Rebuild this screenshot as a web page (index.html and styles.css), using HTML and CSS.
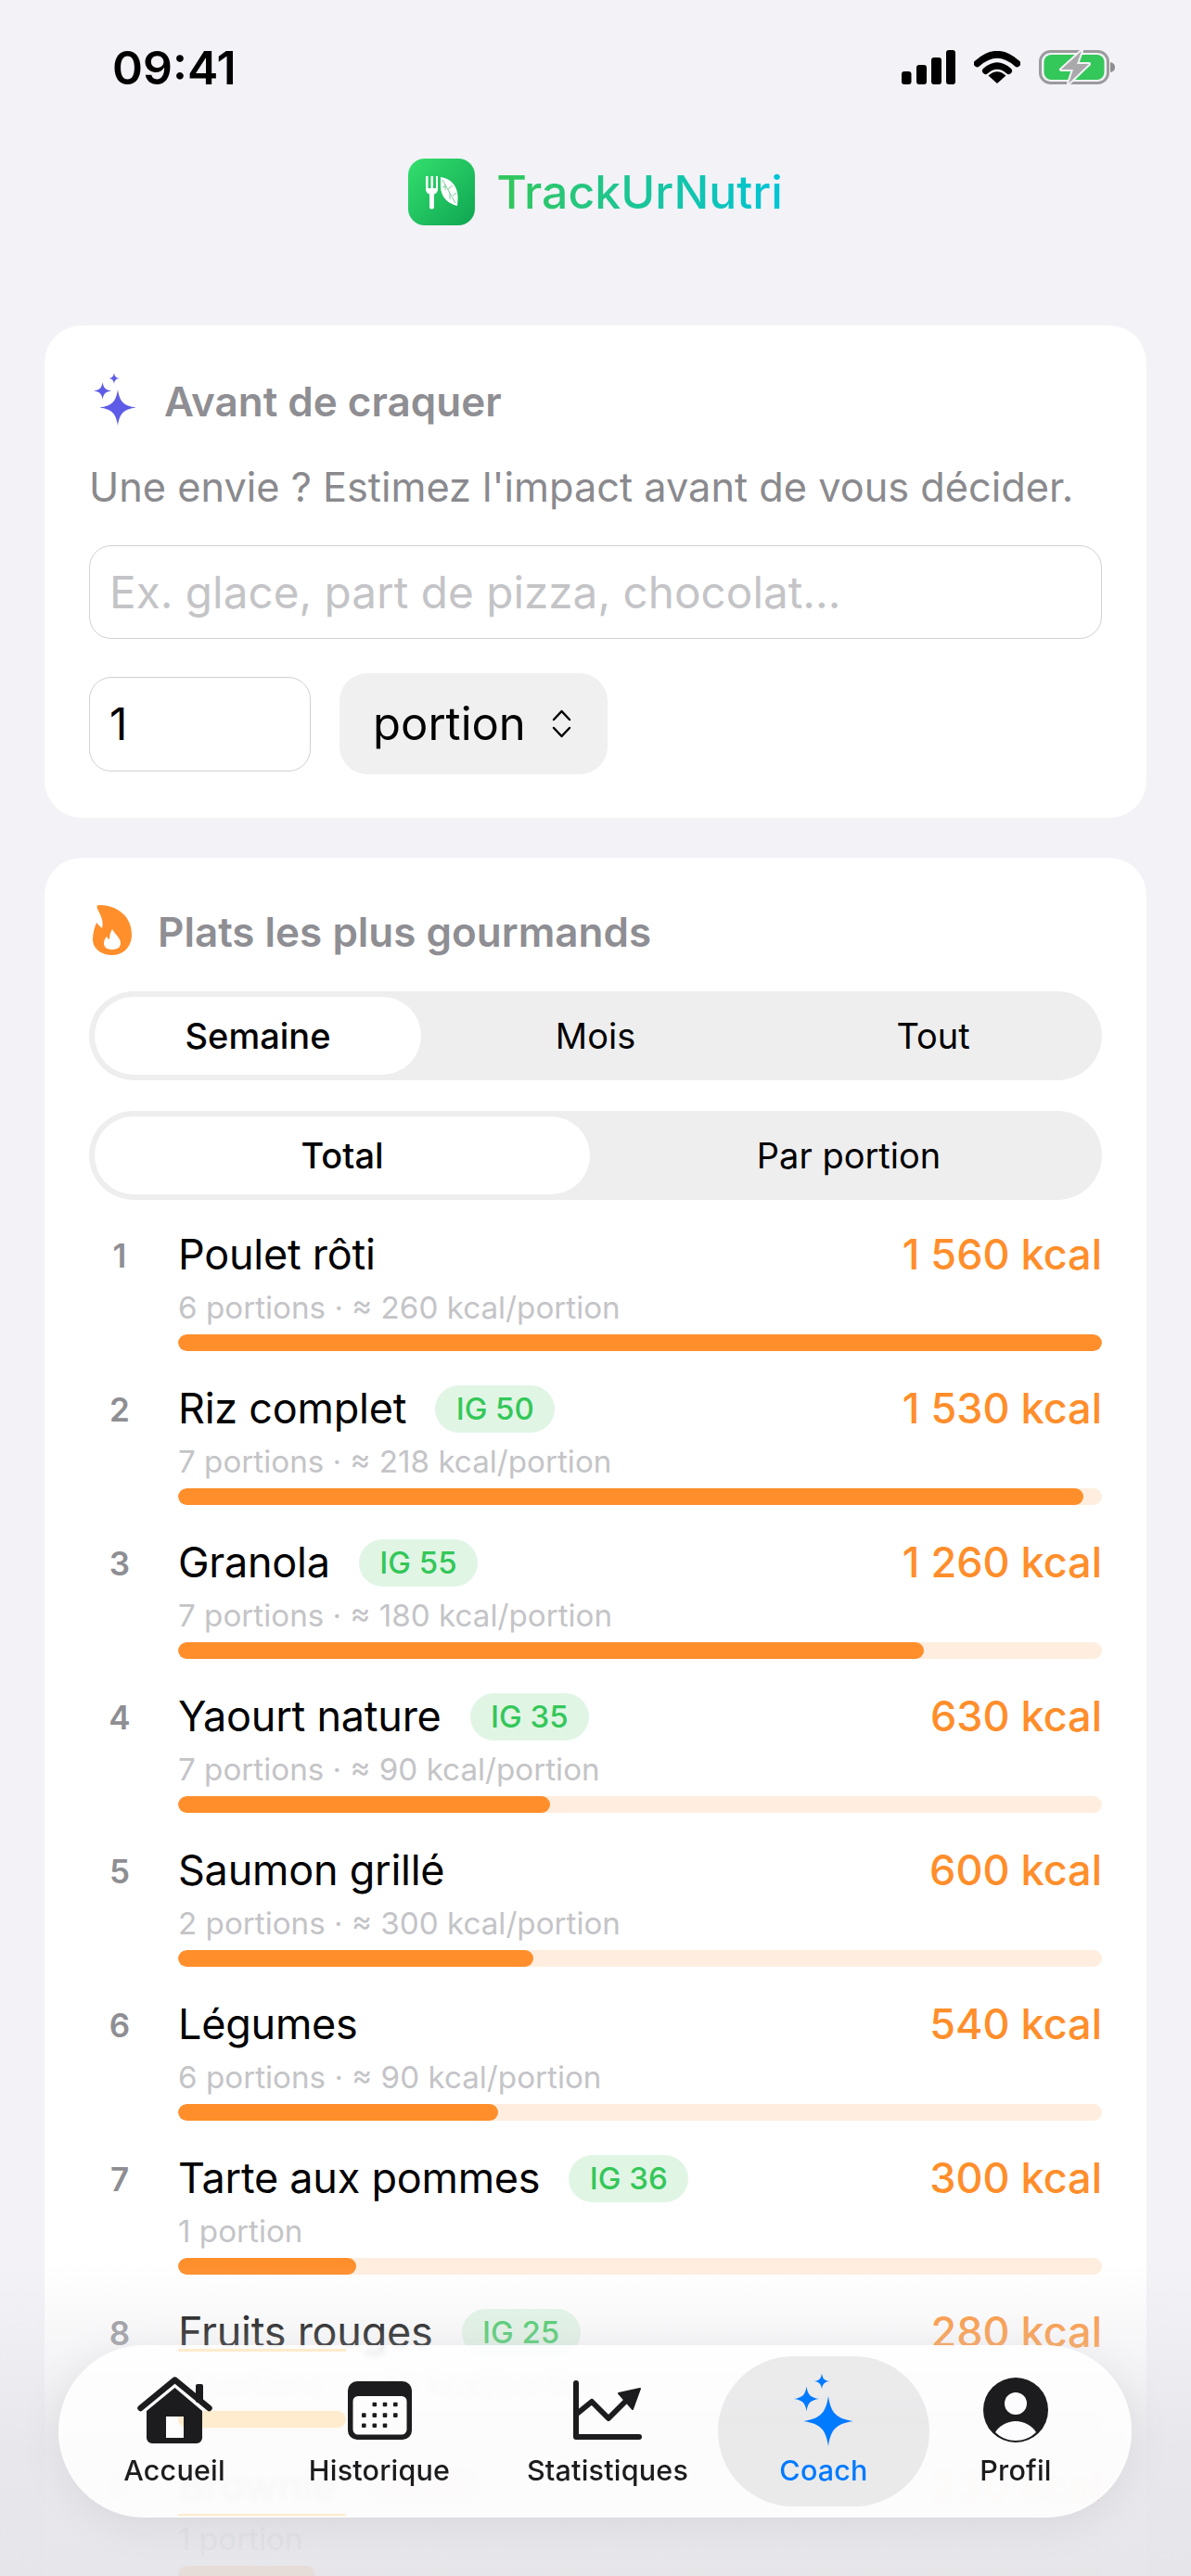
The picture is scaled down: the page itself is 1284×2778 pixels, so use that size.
FILE: index.html
```html
<!DOCTYPE html>
<html lang="fr">
<head>
    <meta charset="UTF-8">
    <meta name="viewport" content="width=device-width, initial-scale=1.0">
    <title>TrackUrNutri</title>
    <link rel="stylesheet" href="styles.css">
</head>
<body>
    <svg class="defs" width="0" height="0">
        <defs>
            <path id="spark" d="M0 -1C.1 -.32 .32 -.1 1 0C.32 .1 .1 .32 0 1C-.1 .32 -.32 .1 -1 0C-.32 -.1 -.1 -.32 0 -1Z"/>
            <linearGradient id="logoGrad" x1="0" y1="0" x2="1" y2="1">
                <stop offset="0" stop-color="#34e06e"/>
                <stop offset="1" stop-color="#0fa552"/>
            </linearGradient>
        </defs>
    </svg>

    <div class="screen">
        <!-- Barre de statut -->
        <div class="status">
            <span class="time">09:41</span>
            <div class="status-icons">
                <svg width="58" height="37" viewBox="0 0 58 37">
                    <rect x="0" y="23" width="10.5" height="14" rx="3"/>
                    <rect x="16" y="16" width="11" height="21" rx="3"/>
                    <rect x="32" y="8" width="11" height="29" rx="3"/>
                    <rect x="48" y="0" width="10" height="37" rx="3"/>
                </svg>
                <svg width="50" height="35" viewBox="0 0 50 35">
                    <path d="M3.5 13.5Q25 -6 46.5 13.5" fill="none" stroke="#000" stroke-width="7.5" stroke-linecap="round"/>
                    <path d="M12.5 21.5Q25 10.5 37.5 21.5" fill="none" stroke="#000" stroke-width="7" stroke-linecap="round"/>
                    <path d="M25 35L15.5 26.5Q25 18 34.5 26.5Z"/>
                </svg>
                <svg width="82" height="39" viewBox="0 0 82 39">
                    <rect x="1.5" y="2.5" width="73" height="34" rx="11" fill="none" stroke="#9b9b9d" stroke-width="3"/>
                    <path d="M77 14Q82 15 82 19.500Q82 24 77 25Z" fill="#8e8e90"/>
                    <rect x="5.500" y="6" width="65" height="27" rx="8" fill="#34c759"/>
                    <path d="M46 2L24 22H37L32 37L54 16H41Z" fill="#a9a9ab" stroke="#f2f2f7" stroke-width="4" stroke-linejoin="round" paint-order="stroke"/>
                </svg>
            </div>
        </div>

        <header class="brand">
            <svg class="brand-icon" width="72" height="72" viewBox="0 0 72 72">
                <rect width="72" height="72" rx="18" fill="url(#logoGrad)"/>
                <path fill="#fff" d="M19 19h2.500v13h3V19h2.500v13h3V19H32v14c0 3-2 5-4 5.500V52a2.500 2.500 0 0 1-5 0V38.500c-2-.5-4-2.500-4-5.500Z"/>
                <path fill="#fff" d="M35 20C45 21 53 29 53.500 40C53.700 44 53.300 48 53 51C44 49 35 42 35 30Z"/>
                <path fill="none" stroke="#7dcf9d" stroke-width="1" d="M37 23L51 48M40 28V34M43 33L48 29M45 37V44M48 40L52 37M41 30L37 31"/>
            </svg>
            <span class="brand-name">TrackUrNutri</span>
        </header>

        <section class="card craving">
            <div class="card-title">
                <svg class="sparkles" width="46" height="57" viewBox="0 0 46 57" fill="#5e5ce6">
                    <use href="#spark" transform="translate(26 37.500) scale(19.500)"/>
                    <use href="#spark" transform="translate(9.600 19.500) scale(9.500)"/>
                    <use href="#spark" transform="translate(22 6) scale(6)"/>
                </svg>
                <h2>Avant de craquer</h2>
            </div>
            <p class="hint">Une envie ? Estimez l'impact avant de vous décider.</p>
            <input class="field field-food" type="text" placeholder="Ex. glace, part de pizza, chocolat...">
            <div class="qty-row">
                <input class="field field-qty" type="text" value="1">
                <div class="unit-select">
                    <span>portion</span>
                    <svg width="21" height="31" viewBox="0 0 21 31" fill="none" stroke="#000" stroke-width="2.500" stroke-linecap="round" stroke-linejoin="round">
                        <path d="M2 11L10.500 2L19 11"/>
                        <path d="M2 20L10.500 29L19 20"/>
                    </svg>
                </div>
            </div>
        </section>

        <section class="card top-meals">
            <div class="card-title title-meals">
                <svg class="flame" width="42" height="54" viewBox="0 0 42 54">
                    <path fill="#ff8e2b" d="M5 .5C6 0 7 0 8 0C27 1 42 12 42 32C42 45 33 54 21 54C9 54 0 47 0 37C0 30 2 24 4 19C5.500 21 7.500 23 10 25C12 18 9 12 6 6C5 4 4 1.500 5 .5Z"/>
                    <path fill="#fff" d="M21 26C24 32 30 35 30 41C30 46 26 48 21 48C16 48 12 46 12 41C12 38 14 35 15 34C16 36 17 37 18 37C18 33 19 29 21 26Z"/>
                </svg>
                <h2>Plats les plus gourmands</h2>
            </div>

            <div class="segment seg-3">
                <span class="seg-item on">Semaine</span>
                <span class="seg-item">Mois</span>
                <span class="seg-item">Tout</span>
            </div>
            <div class="segment seg-2">
                <span class="seg-item on">Total</span>
                <span class="seg-item">Par portion</span>
            </div>

            <ol class="meals">
                <li class="meal">
                    <span class="rank">1</span>
                    <div class="meal-main">
                        <div class="meal-head"><span class="meal-name">Poulet rôti</span><span class="kcal">1 560 kcal</span></div>
                        <div class="meal-sub">6 portions · ≈ 260 kcal/portion</div>
                        <div class="bar"><div class="bar-fill" style="width:100%"></div></div>
                    </div>
                </li>
                <li class="meal">
                    <span class="rank">2</span>
                    <div class="meal-main">
                        <div class="meal-head"><span class="meal-name">Riz complet</span><span class="badge">IG 50</span><span class="kcal">1 530 kcal</span></div>
                        <div class="meal-sub">7 portions · ≈ 218 kcal/portion</div>
                        <div class="bar"><div class="bar-fill" style="width:98%"></div></div>
                    </div>
                </li>
                <li class="meal">
                    <span class="rank">3</span>
                    <div class="meal-main">
                        <div class="meal-head"><span class="meal-name">Granola</span><span class="badge">IG 55</span><span class="kcal">1 260 kcal</span></div>
                        <div class="meal-sub">7 portions · ≈ 180 kcal/portion</div>
                        <div class="bar"><div class="bar-fill" style="width:80.7%"></div></div>
                    </div>
                </li>
                <li class="meal">
                    <span class="rank">4</span>
                    <div class="meal-main">
                        <div class="meal-head"><span class="meal-name">Yaourt nature</span><span class="badge">IG 35</span><span class="kcal">630 kcal</span></div>
                        <div class="meal-sub">7 portions · ≈ 90 kcal/portion</div>
                        <div class="bar"><div class="bar-fill" style="width:40.3%"></div></div>
                    </div>
                </li>
                <li class="meal">
                    <span class="rank">5</span>
                    <div class="meal-main">
                        <div class="meal-head"><span class="meal-name">Saumon grillé</span><span class="kcal">600 kcal</span></div>
                        <div class="meal-sub">2 portions · ≈ 300 kcal/portion</div>
                        <div class="bar"><div class="bar-fill" style="width:38.5%"></div></div>
                    </div>
                </li>
                <li class="meal">
                    <span class="rank">6</span>
                    <div class="meal-main">
                        <div class="meal-head"><span class="meal-name">Légumes</span><span class="kcal">540 kcal</span></div>
                        <div class="meal-sub">6 portions · ≈ 90 kcal/portion</div>
                        <div class="bar"><div class="bar-fill" style="width:34.6%"></div></div>
                    </div>
                </li>
                <li class="meal">
                    <span class="rank">7</span>
                    <div class="meal-main">
                        <div class="meal-head"><span class="meal-name">Tarte aux pommes</span><span class="badge">IG 36</span><span class="kcal">300 kcal</span></div>
                        <div class="meal-sub">1 portion</div>
                        <div class="bar"><div class="bar-fill" style="width:19.3%"></div></div>
                    </div>
                </li>
                <li class="meal">
                    <span class="rank">8</span>
                    <div class="meal-main">
                        <div class="meal-head"><span class="meal-name">Fruits rouges</span><span class="badge">IG 25</span><span class="kcal">280 kcal</span></div>
                        <div class="meal-sub">7 portions · ≈ 40 kcal/portion</div>
                        <div class="bar"><div class="bar-fill" style="width:18%"></div></div>
                    </div>
                </li>
                <li class="meal">
                    <span class="rank">9</span>
                    <div class="meal-main">
                        <div class="meal-head"><span class="meal-name">Brownie</span><span class="badge badge-high">IG 70</span><span class="kcal">230 kcal</span></div>
                        <div class="meal-sub">1 portion</div>
                        <div class="bar"><div class="bar-fill" style="width:14.8%"></div></div>
                    </div>
                </li>
            </ol>
        </section>

        <div class="fade"></div>

        <!-- Barre d'onglets -->
        <nav class="tabbar">
            <span class="glass-edge"></span>
            <span class="glass-bar"></span>
            <a class="tab">
                <span class="tab-icon">
                    <svg width="81" height="72" viewBox="0 0 81 72" fill="#1c1c1e">
                        <path d="M3.500 34L40.500 3.500L77.500 34" fill="none" stroke="#1c1c1e" stroke-width="6.500" stroke-linecap="round" stroke-linejoin="round"/>
                        <rect x="63" y="8" width="8" height="20" rx="2"/>
                        <path fill-rule="evenodd" d="M40.500 12L70 37V66a6 6 0 0 1-6 6H16a6 6 0 0 1-6-6V37ZM31 43h19v23H31Z"/>
                    </svg>
                </span>
                <span class="tab-label">Accueil</span>
            </a>
            <a class="tab">
                <span class="tab-icon">
                    <svg width="69" height="63" viewBox="0 0 69 63">
                        <path fill="#1c1c1e" fill-rule="evenodd" d="M10 0H59a10 10 0 0 1 10 10V53a10 10 0 0 1-10 10H10A10 10 0 0 1 0 53V10A10 10 0 0 1 10 0ZM11 16a5.500 5.500 0 0 0-5.500 5.500V52a5.500 5.500 0 0 0 5.500 5.500H58a5.500 5.500 0 0 0 5.500-5.500V21.500A5.500 5.500 0 0 0 58 16Z"/>
                        <g fill="#1c1c1e">
                            <rect x="26.500" y="22.700" width="4.600" height="4.600" rx="1"/><rect x="37.700" y="22.700" width="4.600" height="4.600" rx="1"/><rect x="49" y="22.700" width="4.600" height="4.600" rx="1"/>
                            <rect x="15" y="34.300" width="4.600" height="4.600" rx="1"/><rect x="26.500" y="34.300" width="4.600" height="4.600" rx="1"/><rect x="37.700" y="34.300" width="4.600" height="4.600" rx="1"/><rect x="49" y="34.300" width="4.600" height="4.600" rx="1"/>
                            <rect x="15" y="45.400" width="4.600" height="4.600" rx="1"/><rect x="26.500" y="45.400" width="4.600" height="4.600" rx="1"/><rect x="37.700" y="45.400" width="4.600" height="4.600" rx="1"/>
                        </g>
                    </svg>
                </span>
                <span class="tab-label">Historique</span>
            </a>
            <a class="tab">
                <span class="tab-icon">
                    <svg width="74" height="64" viewBox="0 0 74 64" fill="none" stroke="#1c1c1e" stroke-width="6" stroke-linecap="round" stroke-linejoin="round">
                        <path d="M3 3V61H71"/>
                        <path d="M4 36L20 23L38 41L56 23"/>
                        <path d="M72 9L49 14L64 31Z" fill="#1c1c1e" stroke-width="2"/>
                    </svg>
                </span>
                <span class="tab-label">Statistiques</span>
            </a>
            <a class="tab active">
                <span class="tab-icon">
                    <svg width="64" height="78" viewBox="0 0 64 78" fill="#007aff">
                        <use href="#spark" transform="translate(37 51) scale(27)"/>
                        <use href="#spark" transform="translate(13.500 27) scale(13.500)"/>
                        <use href="#spark" transform="translate(30 8) scale(8.500)"/>
                    </svg>
                </span>
                <span class="tab-label">Coach</span>
            </a>
            <a class="tab">
                <span class="tab-icon">
                    <svg width="70" height="70" viewBox="0 0 70 70">
                        <circle cx="35" cy="35" r="35" fill="#1c1c1e"/>
                        <circle cx="35" cy="28" r="12" fill="#fcfcfe"/>
                        <path fill="#fcfcfe" d="M13 59C17 52 26 47 35 47C44 47 53 52 57 59C51 65 43 68 35 68C27 68 19 65 13 59Z"/>
                    </svg>
                </span>
                <span class="tab-label">Profil</span>
            </a>
        </nav>
    </div>
</body>
</html>
```

FILE: styles.css
```css
* {
    box-sizing: border-box;
}
body {
    margin: 0;
    font-family: Inter, "Noto Sans", sans-serif;
    color: #000;
}
.defs {
    position: absolute;
}
.screen {
    position: relative;
    width: 1284px;
    height: 2778px;
    overflow: hidden;
    background: #f2f2f7;
    padding: 0 48px;
}

/* barre de statut */
.status {
    height: 171px;
    padding: 43px 34px 0 73px;
    display: flex;
    justify-content: space-between;
    align-items: flex-start;
}
.time {
    font-size: 50px;
    font-weight: 600;
    line-height: 60px;
}
.status-icons {
    display: flex;
    align-items: center;
    gap: 20px;
    padding-top: 10px;
}

.brand {
    height: 180px;
    display: flex;
    justify-content: center;
    align-items: flex-start;
    gap: 23px;
}
.brand-name {
    font-size: 50px;
    font-weight: 500;
    line-height: 72px;
    background: linear-gradient(90deg, #34c759, #00c4d8);
    -webkit-background-clip: text;
    background-clip: text;
    color: transparent;
}

/* cartes */
.card {
    background: #fff;
    border-radius: 40px;
    padding: 0 48px;
}
.craving {
    padding-top: 52px;
    padding-bottom: 47px;
    margin-bottom: 43px;
}
.top-meals {
    padding-top: 50px;
}
.card-title {
    display: flex;
    align-items: center;
    height: 60px;
    gap: 30px;
}
.title-meals {
    gap: 28px;
    margin-left: 4px;
}
.card-title h2 {
    margin: 0;
    font-size: 44px;
    font-weight: 600;
    color: #8e8e93;
}
.sparkles {
    margin-left: 5px;
    margin-bottom: 5px;
}
.flame {
    margin-bottom: 4px;
}
.hint {
    margin: 36px 0 37px;
    font-size: 43.300px;
    line-height: 52px;
    color: #8a8a8e;
}

.field {
    display: block;
    border: 1.5px solid #d1d1d6;
    border-radius: 24px;
    background: #fff;
    padding: 0 21px;
    font-family: inherit;
    font-size: 47.700px;
    color: #000;
    outline: none;
}
.field::placeholder {
    color: #c4c4c7;
    opacity: 1;
}
.field-food {
    width: 100%;
    height: 101px;
}
.qty-row {
    margin-top: 37px;
    height: 109px;
    display: flex;
    align-items: center;
    gap: 31px;
}
.field-qty {
    width: 239px;
    height: 102px;
}
.unit-select {
    width: 289px;
    height: 109px;
    border-radius: 30px;
    background: #f0f0f1;
    padding-left: 36px;
    display: flex;
    align-items: center;
    gap: 28px;
    font-size: 49px;
}

/* controles segmentes */
.segment {
    display: grid;
    height: 96px;
    margin-top: 33px;
    border-radius: 48px;
    background: #eeeeef;
}
.title-meals + .segment {
    margin-top: 34px;
}
.seg-3 {
    grid-template-columns: repeat(3, 1fr);
}
.seg-2 {
    grid-template-columns: repeat(2, 1fr);
}
.seg-item {
    display: flex;
    align-items: center;
    justify-content: center;
    margin: 6px;
    border-radius: 42px;
    font-size: 38px;
}
.seg-item.on {
    background: #fff;
    font-weight: 500;
}

/* liste */
.meals {
    list-style: none;
    margin: 33px 0 0;
    padding: 0;
}
.meal {
    display: flex;
    height: 166px;
}
.rank {
    width: 66px;
    flex: none;
    margin-right: 30px;
    padding-top: 1px;
    text-align: center;
    font-size: 35px;
    font-weight: 600;
    line-height: 52px;
    color: #8e8e93;
}
.meal-main {
    flex: 1;
}
.meal-head {
    display: flex;
    align-items: center;
    height: 52px;
}
.meal-name {
    font-size: 45px;
    letter-spacing: -0.25px;
    line-height: 52px;
}
.kcal {
    margin-left: auto;
    font-size: 45px;
    font-weight: 500;
    line-height: 52px;
    color: #ff8e2b;
}
.badge {
    margin-left: 31px;
    height: 51px;
    padding: 0 22.500px;
    border-radius: 26px;
    background: #e1f5e5;
    color: #34c759;
    font-size: 33px;
    font-weight: 500;
    line-height: 51px;
}
.badge-high {
    background: #ffe3e1;
    color: #ff3b30;
}
.meal-sub {
    margin-top: 11px;
    font-size: 33.200px;
    line-height: 40px;
    color: #c4c4c7;
}
.bar {
    margin-top: 9px;
    height: 18px;
    border-radius: 9px;
    background: #ffeedf;
    overflow: hidden;
}
.bar-fill {
    height: 100%;
    border-radius: 9px;
    background: #ff8e2b;
}

/* degrade au-dessus de la liste */
.fade {
    position: absolute;
    left: 0;
    right: 0;
    top: 2440px;
    bottom: 0;
    background: linear-gradient(to bottom,
        rgba(228, 228, 233, 0),
        rgba(228, 228, 233, 0.3) 80px,
        rgba(228, 228, 233, 0.78) 200px,
        rgba(228, 228, 233, 0.92));
}

/* barre d'onglets */
.tabbar {
    position: absolute;
    left: 63px;
    top: 2529px;
    width: 1157px;
    height: 186px;
    padding: 12px 31px;
    border-radius: 93px;
    display: grid;
    grid-template-columns: 188px 254px 238px 228px 186px;
    background: rgba(255, 255, 255, 0.86);
    backdrop-filter: blur(3px);
    box-shadow: 0 8px 40px rgba(120, 120, 130, 0.14);
}
/* reflets de la barre 8 dans le verre */
.glass-edge {
    position: absolute;
    left: 129px;
    top: 4px;
    width: 181px;
    height: 180px;
    border-top: 3px solid #ffeccc;
    border-bottom: 2px solid #ffeccc;
}
.glass-bar {
    position: absolute;
    left: 129px;
    top: 71px;
    width: 181px;
    height: 18px;
    border-radius: 9px;
    background: #ffecce;
}
.tab {
    position: relative;
    display: flex;
    flex-direction: column;
    align-items: center;
    padding-top: 18px;
    border-radius: 81px;
    color: #1c1c1e;
}
.tab.active {
    background: rgba(118, 118, 128, 0.14);
    color: #007aff;
}
.tab-icon {
    height: 80px;
    display: flex;
    align-items: center;
    justify-content: center;
}
.tab-label {
    margin-top: 7px;
    font-size: 30.500px;
    font-weight: 500;
    letter-spacing: 0.2px;
    line-height: 36px;
}
```
